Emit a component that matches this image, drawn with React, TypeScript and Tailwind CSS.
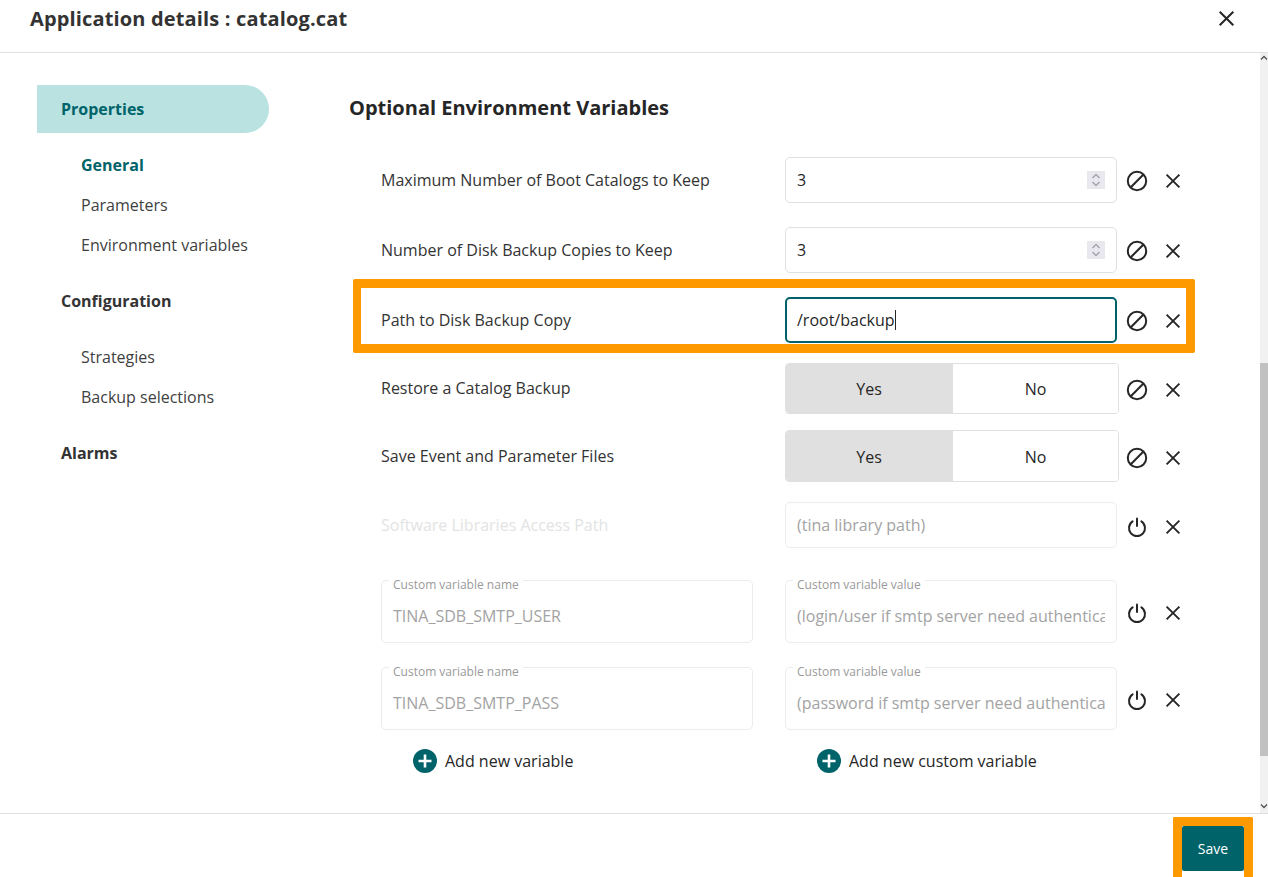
import React from "react";

function BanIcon() {
  return (
    <svg width="22" height="22" viewBox="0 0 22 22" fill="none" stroke="#262626" strokeWidth="2">
      <circle cx="11" cy="11" r="9.2" />
      <path d="M4.8 17.2 17.2 4.8" />
    </svg>
  );
}
function PowerIcon() {
  return (
    <svg width="22" height="22" viewBox="0 0 22 22" fill="none" stroke="#262626" strokeWidth="2" strokeLinecap="round">
      <path d="M11 2.5v7.5" />
      <path d="M6.6 5.4a8 8 0 1 0 8.8 0" />
    </svg>
  );
}
function CloseIcon({ size = 16 }: { size?: number }) {
  return (
    <svg width={size} height={size} viewBox="0 0 16 16" fill="none" stroke="#262626" strokeWidth="1.9">
      <path d="M1.6 1.6 14.4 14.4M14.4 1.6 1.6 14.4" />
    </svg>
  );
}
function Actions({ power }: { power?: boolean }) {
  return (
    <div className="flex items-center ml-[9px] shrink-0 translate-y-[1px]">
      <div className="w-[22px] h-[22px]">{power ? <PowerIcon /> : <BanIcon />}</div>
      <div className="ml-[17px] w-[16px] h-[16px]"><CloseIcon /></div>
    </div>
  );
}
function Spinner() {
  return (
    <div className="absolute right-[11px] top-[13px] w-[18px] h-[18px] bg-[#e8e8ee] flex items-center justify-center">
      <svg width="12" height="16" viewBox="0 0 12 16" fill="none" stroke="#a3a3ad" strokeWidth="1.4">
        <path d="M2.5 6 6 2.5 9.5 6M2.5 10 6 13.5 9.5 10" />
      </svg>
    </div>
  );
}
function NumberRow({ label, top }: { label: string; top: string }) {
  return (
    <div className={`flex items-center ${top}`}>
      <div className="w-[404px] text-[16px] text-[#333]">{label}</div>
      <div className="relative w-[332px] h-[46px] border border-[#e0e0e0] rounded-[5px] px-[11px] flex items-center text-[16px] text-[#262626]">
        3
        <Spinner />
      </div>
      <Actions />
    </div>
  );
}
function ToggleRow({ label, top, h, low }: { label: string; top: string; h: string; low?: boolean }) {
  return (
    <div className={`flex items-center ${top}`}>
      <div className={`w-[404px] text-[16px] text-[#333] ${low ? "" : "-translate-y-[1px]"}`}>{label}</div>
      <div className={`flex w-[334px] ${h} border border-[#e0e0e0] rounded-[4px] overflow-hidden text-[16px] text-[#262626] ${low ? "leading-[26px]" : ""}`}>
        <div className={`w-[167px] bg-[#e0e0e0] flex items-center justify-center pr-[1px] ${low ? "pt-[2px]" : ""}`}>Yes</div>
        <div className={`flex-1 bg-white flex items-center justify-center ${low ? "pt-[2px]" : ""}`}>No</div>
      </div>
      <div className={`-ml-[2px] ${low ? "translate-y-[1px]" : ""}`}><Actions /></div>
    </div>
  );
}
function FloatField({ label, value, width }: { label: string; value: string; width: string }) {
  return (
    <div className={`relative ${width} h-[63px] border border-[#ececec] rounded-[5px]`}>
      <span className="absolute left-[7px] -top-[4px] bg-white px-[4px] text-[12px] leading-[16px] text-[#9a9a9a]">{label}</span>
      <input
        readOnly
        value={value}
        className="absolute left-[11px] right-[11px] top-[20px] h-[30px] text-[16px] text-[#a3a3a3] outline-none bg-transparent"
      />
    </div>
  );
}
function CustomRow({ name, val, top }: { name: string; val: string; top: string }) {
  return (
    <div className={`flex items-center ${top}`}>
      <FloatField label="Custom variable name" value={name} width="w-[372px]" />
      <div className="w-[32px]" />
      <FloatField label="Custom variable value" value={val} width="w-[332px]" />
      <Actions power />
    </div>
  );
}
function AddButton({ label, width }: { label: string; width: string }) {
  return (
    <div className={`flex items-center ${width} pl-[32px]`}>
      <svg width="24" height="24" viewBox="0 0 24 24">
        <circle cx="12" cy="12" r="12" fill="#00636a" />
        <path d="M12 5.5v13M5.5 12h13" stroke="#fff" strokeWidth="2.6" />
      </svg>
      <span className="ml-[8px] text-[16px] text-[#262626]">{label}</span>
    </div>
  );
}

export default function App() {
  return (
    <div className="relative w-[1268px] h-[877px] overflow-hidden bg-white flex flex-col font-['Open_Sans',sans-serif]">
      <header className="h-[53px] shrink-0 border-b border-[#e0e0e0] flex items-start justify-between pl-[30px] pr-[33px]">
        <h1 className="text-[20px] leading-[27px] mt-[5px] font-bold text-[#333] tracking-[0.15px]">Application details : catalog.cat</h1>
        <div className="mt-[10px]">
          <CloseIcon size={17} />
        </div>
      </header>

      <div className="flex-1 flex min-h-0">
        <aside className="w-[349px] shrink-0 pl-[37px] pt-[32px]">
          <div className="w-[232px] h-[48px] bg-[#b9e2e1] rounded-r-[24px] pl-[24px] flex items-center text-[16px] font-bold text-[#00636a]">Properties</div>
          <nav className="pl-[44px] pt-[21px] text-[16px] leading-[22px] text-[#3f3f3f]">
            <div className="font-bold text-[#00636a]">General</div>
            <div className="mt-[18px]">Parameters</div>
            <div className="mt-[18px]">Environment variables</div>
          </nav>
          <div className="pl-[24px] mt-[34px] text-[16px] leading-[22px] font-bold text-[#333]">Configuration</div>
          <nav className="pl-[44px] mt-[34px] text-[16px] leading-[22px] text-[#3f3f3f]">
            <div>Strategies</div>
            <div className="mt-[18px]">Backup selections</div>
          </nav>
          <div className="pl-[24px] mt-[34px] text-[16px] leading-[22px] font-bold text-[#333]">Alarms</div>
        </aside>

        <main className="flex-1 min-w-0 pt-[41px]">
          <h2 className="text-[20px] leading-[27px] font-bold text-[#262626]">Optional Environment Variables</h2>
          <div className="pl-[32px]">
            <NumberRow label="Maximum Number of Boot Catalogs to Keep" top="mt-[36px]" />
            <NumberRow label="Number of Disk Backup Copies to Keep" top="mt-[24px]" />
            <div className="flex items-center mt-[24px]">
              <div className="w-[404px] text-[16px] text-[#333]">Path to Disk Backup Copy</div>
              <div className="w-[332px] h-[46px] border-2 border-[#00636a] rounded-[5px] px-[10px] flex items-center text-[16px] text-[#262626]">
                /root/backup<span className="w-[1px] h-[20px] bg-[#262626]" />
              </div>
              <Actions />
            </div>
            <ToggleRow label="Restore a Catalog Backup" top="mt-[20px]" h="h-[51px]" />
            <ToggleRow label="Save Event and Parameter Files" top="mt-[16px]" h="h-[52px]" low />
            <div className="flex items-center mt-[20px]">
              <div className="w-[404px] text-[16px] text-[#e3e3e3]">Software Libraries Access Path</div>
              <div className="w-[332px] h-[46px] border border-[#ececec] rounded-[5px] px-[11px] flex items-center text-[16px] text-[#a3a3a3]">(tina library path)</div>
              <div className="translate-y-[1px]"><Actions power /></div>
            </div>
            <CustomRow top="mt-[32px]" name="TINA_SDB_SMTP_USER" val="(login/user if smtp server need authentication)" />
            <CustomRow top="mt-[24px]" name="TINA_SDB_SMTP_PASS" val="(password if smtp server need authentication)" />
            <div className="flex mt-[19px]">
              <AddButton label="Add new variable" width="w-[404px]" />
              <AddButton label="Add new custom variable" width="w-[400px]" />
            </div>
          </div>
        </main>

        <div className="w-[8px] shrink-0 bg-[#f1f1f1] flex flex-col items-center">
          <svg className="mt-[2px]" width="8" height="6" viewBox="0 0 8 6" fill="none" stroke="#505050" strokeWidth="1.3"><path d="M1 4.5 4 1.5l3 3" /></svg>
          <div className="mt-[302px] w-full h-[393px] bg-[#c1c1c1]" />
          <svg className="mt-[47px]" width="8" height="6" viewBox="0 0 8 6" fill="none" stroke="#505050" strokeWidth="1.3"><path d="M1 1.5 4 4.5l3-3" /></svg>
        </div>
      </div>

      <footer className="h-[64px] shrink-0 border-t border-[#e0e0e0] flex items-start justify-end pr-[24px] pt-[12px]">
        <button className="w-[62px] h-[45px] bg-[#00636a] rounded-[2px] text-[14px] text-white">Save</button>
      </footer>

      <div className="absolute left-[353px] top-[279px] w-[842px] h-[74px] border-[9px] border-l-[8px] border-[#ff9900] rounded-[2px] pointer-events-none" />
      <div className="absolute left-[1173px] top-[817px] w-[80px] h-[60px] border-[9px] border-b-[0px] border-[#ff9900] rounded-t-[2px] pointer-events-none" />
    </div>
  );
}
